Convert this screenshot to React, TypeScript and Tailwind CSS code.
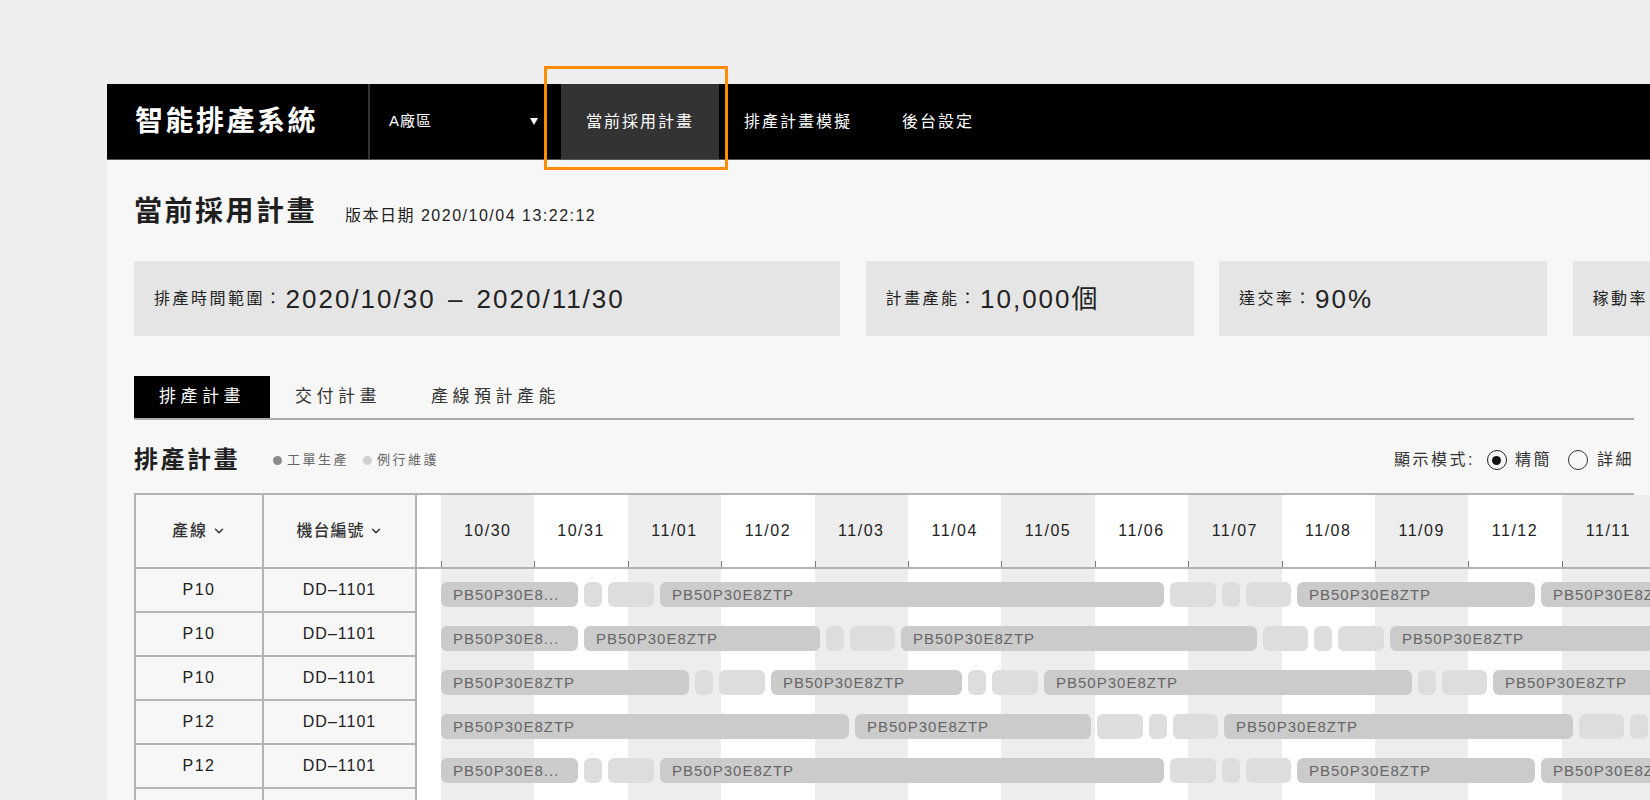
import { ChevronDown } from "lucide-react";

type Bar = { w: number; label?: string };

const dates = [
  "10/30", "10/31", "11/01", "11/02", "11/03", "11/04", "11/05",
  "11/06", "11/07", "11/08", "11/09", "11/12", "11/11",
];

const rowA: Bar[] = [
  { w: 137, label: "PB50P30E8..." },
  { w: 18 },
  { w: 46 },
  { w: 504, label: "PB50P30E8ZTP" },
  { w: 46 },
  { w: 18 },
  { w: 45 },
  { w: 238, label: "PB50P30E8ZTP" },
  { w: 240, label: "PB50P30E8ZTP" },
];

const rowB: Bar[] = [
  { w: 137, label: "PB50P30E8..." },
  { w: 236, label: "PB50P30E8ZTP" },
  { w: 18 },
  { w: 45 },
  { w: 356, label: "PB50P30E8ZTP" },
  { w: 45 },
  { w: 18 },
  { w: 46 },
  { w: 300, label: "PB50P30E8ZTP" },
];

const rowC: Bar[] = [
  { w: 248, label: "PB50P30E8ZTP" },
  { w: 18 },
  { w: 46 },
  { w: 191, label: "PB50P30E8ZTP" },
  { w: 18 },
  { w: 46 },
  { w: 368, label: "PB50P30E8ZTP" },
  { w: 18 },
  { w: 45 },
  { w: 240, label: "PB50P30E8ZTP" },
];

const rowD: Bar[] = [
  { w: 408, label: "PB50P30E8ZTP" },
  { w: 236, label: "PB50P30E8ZTP" },
  { w: 46 },
  { w: 18 },
  { w: 45 },
  { w: 349, label: "PB50P30E8ZTP" },
  { w: 45 },
  { w: 18 },
  { w: 45 },
];

const rows = [
  { line: "P10", machine: "DD–1101", bars: rowA },
  { line: "P10", machine: "DD–1101", bars: rowB },
  { line: "P10", machine: "DD–1101", bars: rowC },
  { line: "P12", machine: "DD–1101", bars: rowD },
  { line: "P12", machine: "DD–1101", bars: rowA },
  { line: "P12", machine: "DD–1101", bars: rowB },
];

function StatCard({ label, children, wide }: { label: string; children: React.ReactNode; wide?: boolean }) {
  return (
    <div
      className={`${wide ? "w-[706px]" : "w-[328px]"} h-[75px] shrink-0 bg-[#e5e5e5] flex items-center pl-[20px] whitespace-nowrap`}
    >
      <span className="text-[16px] tracking-[2.5px] text-[#222]">{label}</span>
      <span className="ml-[2px] text-[26px] tracking-[2px] text-[#222] leading-none">{children}</span>
    </div>
  );
}

export default function App() {
  return (
    <div className="relative w-[1650px] h-[800px] overflow-hidden bg-[#eeeeee] pt-[84px] pl-[107px] font-['Liberation_Sans','Noto_Sans_CJK_TC',sans-serif] text-[#1f1f1f]">
      <div className="h-[716px] bg-[#f7f7f7] overflow-hidden flex flex-col">
        {/* NAVBAR */}
        <nav className="h-[76px] shrink-0 bg-black border-b border-[#555] flex items-stretch text-white">
          <div className="w-[263px] shrink-0 pl-[28px] flex items-center border-r-2 border-[#333]">
            <span className="text-[28px] font-bold tracking-[2.5px] leading-none">智能排產系統</span>
          </div>
          <div className="w-[191px] shrink-0 pl-[19px] pr-[23px] flex items-center justify-between">
            <span className="text-[15px] tracking-[1px]">A廠區</span>
            <svg width="8" height="7" viewBox="0 0 8 7">
              <path d="M0 0 L8 0 L4 7 Z" fill="#fff" />
            </svg>
          </div>
          <div className="px-[25px] bg-[#333] flex items-center text-[16px] tracking-[2px]">當前採用計畫</div>
          <div className="px-[25px] flex items-center text-[16px] tracking-[2px]">排產計畫模擬</div>
          <div className="px-[25px] flex items-center text-[16px] tracking-[2px]">後台設定</div>
        </nav>

        <div className="flex-1 pl-[27px] pr-[16px] pt-[38px]">
          {/* TITLE */}
          <div className="flex items-baseline whitespace-nowrap">
            <h1 className="text-[28px] font-bold tracking-[2.5px] leading-[28px]">當前採用計畫</h1>
            <span className="ml-[28px] text-[16px] tracking-[1.5px]">版本日期 2020/10/04 13:22:12</span>
          </div>

          {/* STATS */}
          <div className="mt-[33px] flex gap-[25.5px]">
            <StatCard wide label="排產時間範圍：">
              2020/10/30 <span className="mx-[3px]">–</span> 2020/11/30
            </StatCard>
            <StatCard label="計畫產能：">10,000個</StatCard>
            <StatCard label="達交率：">90%</StatCard>
            <StatCard label="稼動率：">85%</StatCard>
          </div>

          {/* TABS */}
          <div className="mt-[40px] flex border-b-2 border-[#aaaaaa]">
            <div className="h-[42px] px-[25px] flex items-center bg-black text-white text-[17px] tracking-[4.5px]">排產計畫</div>
            <div className="h-[42px] px-[25px] flex items-center text-[#333] text-[17px] tracking-[4.5px]">交付計畫</div>
            <div className="h-[42px] px-[25px] flex items-center text-[#333] text-[17px] tracking-[4.5px]">產線預計產能</div>
          </div>

          {/* SECTION HEADER */}
          <div className="mt-[28px] h-[24px] flex items-center justify-between whitespace-nowrap">
            <div className="flex items-center">
              <h2 className="text-[24px] font-bold tracking-[2.5px] leading-[24px]">排產計畫</h2>
              <div className="ml-[33px] flex items-center text-[13px] tracking-[2.5px] text-[#666]">
                <span className="w-[9px] h-[9px] rounded-full bg-[#8a8a8a]" />
                <span className="ml-[5px]">工單生產</span>
                <span className="ml-[14px] w-[9px] h-[9px] rounded-full bg-[#d0d0d0]" />
                <span className="ml-[5px]">例行維護</span>
              </div>
            </div>
            <div className="flex items-center text-[16px] tracking-[2.5px] text-[#333]">
              <span>顯示模式:</span>
              <span className="ml-[12px] w-[20px] h-[20px] rounded-full border-[1.5px] border-[#222] flex items-center justify-center">
                <span className="w-[9px] h-[9px] rounded-full bg-[#111]" />
              </span>
              <span className="ml-[8px]">精簡</span>
              <span className="ml-[16px] w-[20px] h-[20px] rounded-full border-[1.5px] border-[#333]" />
              <span className="ml-[9px]">詳細</span>
            </div>
          </div>

          {/* TABLE */}
          <div className="mt-[21px] flex border-t-2 border-[#b3b3b3]">
            <div className="w-[130px] shrink-0 border-l-2 border-r-2 border-[#b3b3b3]">
              <div className="h-[74px] border-b-2 border-[#b3b3b3] flex items-center justify-center gap-[4px] text-[16px] tracking-[2px] text-[#333] font-medium">
                產線
                <ChevronDown size={14} strokeWidth={2.5} />
              </div>
              {rows.map((r, i) => (
                <div key={i} className="h-[44px] border-b-2 border-[#b3b3b3] flex items-center justify-center text-[16px] tracking-[1.5px] text-[#222]">
                  {r.line}
                </div>
              ))}
            </div>
            <div className="w-[153px] shrink-0 border-r-2 border-[#b3b3b3]">
              <div className="h-[74px] border-b-2 border-[#b3b3b3] flex items-center justify-center gap-[4px] text-[16px] tracking-[1px] text-[#333] font-medium">
                機台編號
                <ChevronDown size={14} strokeWidth={2.5} />
              </div>
              {rows.map((r, i) => (
                <div key={i} className="h-[44px] border-b-2 border-[#b3b3b3] flex items-center justify-center text-[16px] tracking-[1px] text-[#222]">
                  {r.machine}
                </div>
              ))}
            </div>

            {/* GANTT */}
            <div className="relative w-[1300px] shrink-0 bg-white">
              <div className="absolute inset-0 pl-[24px] flex">
                {dates.map((d, i) => (
                  <div key={d} className={`w-[93.4px] shrink-0 ${i % 2 === 0 ? "bg-[#ededed]" : "bg-white"}`} />
                ))}
              </div>
              <div className="relative h-[74px] border-b-2 border-[#b3b3b3] pl-[24px] flex">
                {dates.map((d) => (
                  <div key={d} className="relative w-[93.4px] shrink-0 flex items-center justify-center text-[16px] tracking-[1.5px] text-[#222]">
                    {d}
                    <span className="absolute left-0 bottom-0 w-px h-[6px] bg-[#777]" />
                  </div>
                ))}
              </div>
              {rows.map((r, i) => (
                <div key={i} className="relative h-[44px] pl-[24px] pt-[13px] flex gap-[6px]">
                  {r.bars.map((b, j) => (
                    <div
                      key={j}
                      className={`h-[25px] shrink-0 rounded-[6px] overflow-hidden whitespace-nowrap ${b.label ? "bg-[#cbcbcb]" : "bg-[#dddddd]"}`}
                      style={{ width: b.w }}
                    >
                      {b.label && (
                        <span className="block pl-[12px] text-[15px] leading-[25px] tracking-[1px] text-[#666]">{b.label}</span>
                      )}
                    </div>
                  ))}
                </div>
              ))}
            </div>
          </div>
        </div>
      </div>

      {/* annotation highlight */}
      <div className="absolute left-[544px] top-[66px] w-[184px] h-[104px] border-[3px] border-[#ff8c00]" />
    </div>
  );
}
